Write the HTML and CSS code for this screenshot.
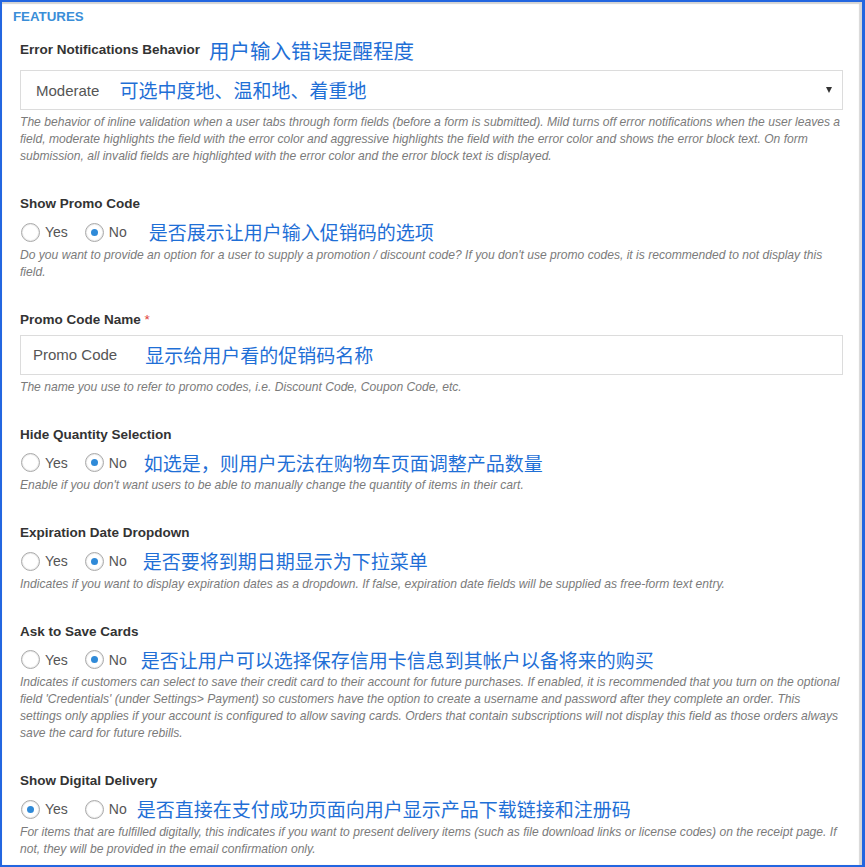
FILE: index.html
```html
<!DOCTYPE html>
<html lang="en">
<head>
<meta charset="utf-8">
<title>Features</title>
<link rel="stylesheet" href="styles.css">
</head>
<body>
<div class="frame">
  <section class="panel">
    <h2 class="panel-title">FEATURES</h2>

    <div class="group group-first">
      <div class="label-row">
        <span class="label">Error Notifications Behavior</span>
        <span class="note note-lg">用户输入错误提醒程度</span>
      </div>
      <div class="field select">
        <span class="value">Moderate</span>
        <span class="note note-sel">可选中度地、温和地、着重地</span>
        <span class="caret"></span>
      </div>
      <p class="help">The behavior of inline validation when a user tabs through form fields (before a form is submitted). Mild turns off error notifications when the user leaves a field, moderate highlights the field with the error color and aggressive highlights the field with the error color and shows the error block text. On form submission, all invalid fields are highlighted with the error color and the error block text is displayed.</p>
    </div>

    <div class="group">
      <div class="label">Show Promo Code</div>
      <div class="radio-row">
        <span class="opt"><span class="radio"></span>Yes</span>
        <span class="opt"><span class="radio checked"></span>No</span>
        <span class="note note-r22">是否展示让用户输入促销码的选项</span>
      </div>
      <p class="help">Do you want to provide an option for a user to supply a promotion / discount code? If you don't use promo codes, it is recommended to not display this field.</p>
    </div>

    <div class="group">
      <div class="label">Promo Code Name <span class="req">*</span></div>
      <div class="field input">
        <span class="value">Promo Code</span>
        <span class="note note-in">显示给用户看的促销码名称</span>
      </div>
      <p class="help">The name you use to refer to promo codes, i.e. Discount Code, Coupon Code, etc.</p>
    </div>

    <div class="group">
      <div class="label">Hide Quantity Selection</div>
      <div class="radio-row">
        <span class="opt"><span class="radio"></span>Yes</span>
        <span class="opt"><span class="radio checked"></span>No</span>
        <span class="note note-r17">如选是，则用户无法在购物车页面调整产品数量</span>
      </div>
      <p class="help">Enable if you don't want users to be able to manually change the quantity of items in their cart.</p>
    </div>

    <div class="group">
      <div class="label">Expiration Date Dropdown</div>
      <div class="radio-row">
        <span class="opt"><span class="radio"></span>Yes</span>
        <span class="opt"><span class="radio checked"></span>No</span>
        <span class="note note-r16">是否要将到期日期显示为下拉菜单</span>
      </div>
      <p class="help">Indicates if you want to display expiration dates as a dropdown. If false, expiration date fields will be supplied as free-form text entry.</p>
    </div>

    <div class="group">
      <div class="label">Ask to Save Cards</div>
      <div class="radio-row">
        <span class="opt"><span class="radio"></span>Yes</span>
        <span class="opt"><span class="radio checked"></span>No</span>
        <span class="note note-r14">是否让用户可以选择保存信用卡信息到其帐户以备将来的购买</span>
      </div>
      <p class="help">Indicates if customers can select to save their credit card to their account for future purchases. If enabled, it is recommended that you turn on the optional field 'Credentials' (under Settings&gt; Payment) so customers have the option to create a username and password after they complete an order. This settings only applies if your account is configured to allow saving cards. Orders that contain subscriptions will not display this field as those orders always save the card for future rebills.</p>
    </div>

    <div class="group">
      <div class="label">Show Digital Delivery</div>
      <div class="radio-row">
        <span class="opt"><span class="radio checked"></span>Yes</span>
        <span class="opt"><span class="radio"></span>No</span>
        <span class="note note-r10">是否直接在支付成功页面向用户显示产品下载链接和注册码</span>
      </div>
      <p class="help">For items that are fulfilled digitally, this indicates if you want to present delivery items (such as file download links or license codes) on the receipt page. If not, they will be provided in the email confirmation only.</p>
    </div>
  </section>
</div>
</body>
</html>
```

FILE: styles.css
```css
html, body {
  margin: 0;
  padding: 0;
  background: #ffffff;
}

body {
  font-family: "Liberation Sans", Arial, sans-serif;
}

.frame {
  width: 865px;
  height: 867px;
  box-sizing: border-box;
  border: 2px solid #2366e0;
  border-right-width: 3px;
  box-shadow: inset 0 2px 1px #d4d4d4, inset -3px 0 1px #d8d8d8;
  overflow: hidden;
  background: #ffffff;
}

.panel {
  padding: 7px 19px 0 11px;
}

.panel-title {
  margin: 0;
  font-size: 13.3px;
  line-height: 16px;
  font-weight: bold;
  color: #3a8ed8;
}

.group {
  margin: 30px 0 0 7px;
}

.group-first {
  margin-top: 13px;
}

.label-row {
  display: flex;
  align-items: center;
  height: 24px;
}

.label {
  font-size: 13.5px;
  line-height: 18px;
  font-weight: bold;
  color: #333333;
}

.req {
  color: #e0413a;
  font-weight: normal;
}

.note {
  font-family: "Noto Sans CJK SC", sans-serif;
  color: #1f6fd6;
  font-size: 19px;
  line-height: 24px;
  white-space: nowrap;
}

.note-lg {
  font-size: 20.5px;
  margin-left: 9px;
}

.note-sel {
  margin-left: 20px;
}

.note-in {
  margin-left: 28px;
}

.note-r22 { margin-left: 22px; }
.note-r17 { margin-left: 17px; }
.note-r16 { margin-left: 16px; }
.note-r14 { margin-left: 14px; }
.note-r10 { margin-left: 10px; }

.field {
  display: flex;
  align-items: center;
  height: 40px;
  box-sizing: border-box;
  border: 1px solid #dcdcdc;
  background: #ffffff;
}

.select {
  margin-top: 8px;
  padding: 0 10px 0 15px;
}

.input {
  margin-top: 6px;
  padding: 0 12px;
}

.value {
  font-size: 15px;
  color: #555555;
}

.caret {
  margin-left: auto;
  width: 0;
  height: 0;
  border-left: 3.5px solid transparent;
  border-right: 3.5px solid transparent;
  border-top: 6px solid #333333;
}

.help {
  margin: 4px 0 0;
  font-size: 12.1px;
  line-height: 17px;
  font-style: italic;
  color: #7b7b7b;
}

.radio-row {
  display: flex;
  align-items: center;
  height: 24px;
  margin-top: 7px;
}

.radio-row + .help {
  margin-top: 2.5px;
}

.opt {
  display: flex;
  align-items: center;
  gap: 5px;
  font-size: 14px;
  color: #555555;
}

.opt + .opt {
  margin-left: 17px;
}

.opt:first-child {
  margin-left: 1px;
}

.radio {
  position: relative;
  width: 19px;
  height: 19px;
  box-sizing: border-box;
  border: 1px solid #a9a9a9;
  border-radius: 50%;
  background: #ffffff;
  box-shadow: inset 0 0 0 1px #ececec;
}

.radio.checked::after {
  content: "";
  position: absolute;
  left: 5px;
  top: 5px;
  width: 7px;
  height: 7px;
  border-radius: 50%;
  background: #2f8ad8;
}
```
